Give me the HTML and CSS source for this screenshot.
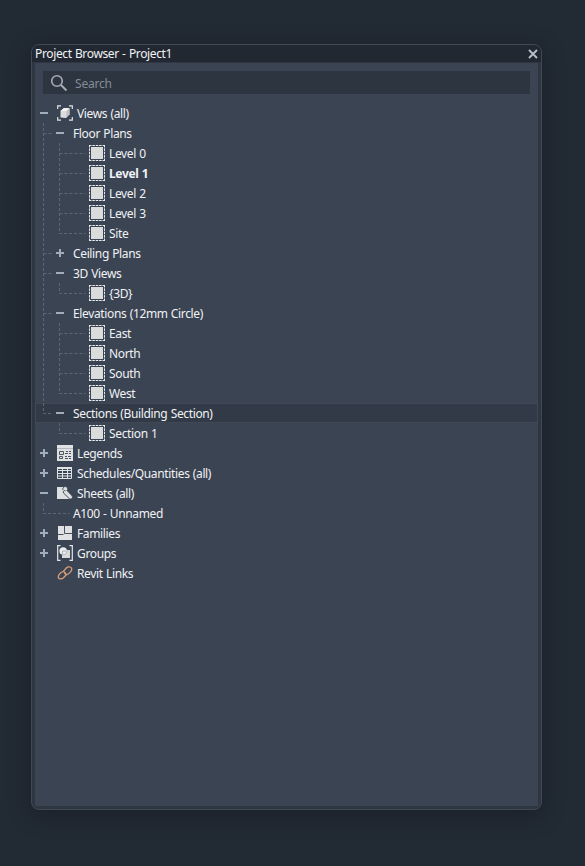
FILE: index.html
```html
<!DOCTYPE html>
<html lang="en">
<head>
<meta charset="utf-8">
<title>Project Browser</title>
<link rel="stylesheet" href="styles.css">
</head>
<body>
<svg width="0" height="0" class="defs">
  <symbol id="minus" viewBox="0 0 16 20"><path d="M4 10h8" stroke="#a0adba" stroke-width="2"/></symbol>
  <symbol id="plus" viewBox="0 0 16 20"><path d="M4 10h8M8 6v8" stroke="#a0adba" stroke-width="2"/></symbol>
  <symbol id="v" viewBox="0 0 16 20"><path class="ln" d="M7.5 0v20"/></symbol>
  <symbol id="tee" viewBox="0 0 16 20"><path class="ln" d="M7.5 0v20M7.5 10.5h9"/></symbol>
  <symbol id="ell" viewBox="0 0 16 20"><path class="ln" d="M7.5 0v10.5h9"/></symbol>
  <symbol id="wtee" viewBox="0 0 37 20"><path class="ln" d="M7.5 0v20M7.5 10.5h26"/></symbol>
  <symbol id="well" viewBox="0 0 37 20"><path class="ln" d="M7.5 0v10.5h26"/></symbol>
  <symbol id="view" viewBox="0 0 16 16"><path d="M2 2h12v12H2z" fill="#dadbdb"/><path d="M0 .5h16M0 15.500h16M.5 0v16M15.500 0v16" fill="none" stroke="#e8eaec" stroke-dasharray="2.500 .875"/></symbol>
  <symbol id="views" viewBox="0 0 16 16"><path d="M4 .8H.7V4M12 .8h3.3V4M4 15.2H.7V12M12 15.2h3.3V12" fill="none" stroke="#dfe3e6" stroke-width="1.2"/><path d="M3.500 6 7 3l5.500.2v6L9 13l-5.500-.5z" fill="#dcdddc"/><path d="M3.500 6 7 3l5.500.2L9.500 6z" fill="#f5f5f3"/><path d="m9.500 6 3-2.800v6L9.200 13z" fill="#bfc2c4"/></symbol>
  <symbol id="legend" viewBox="0 0 16 16"><path d="M0 0h16v16H0z" fill="#e0e1e2"/><path d="M0 3.500h16" stroke="#b4b9be"/><path d="M2.500 6.500h4v3h-4zM2.500 11.500h3v2h-3zM9 6.500h2M12 6.500h2M8 8.500h3M12 8.500h2M8 11.500h2M11 11.500h3M8 13.500h3M12 13.500h2" fill="none" stroke="#4a535f"/></symbol>
  <symbol id="schedule" viewBox="0 0 16 16"><path d="M.5 2.500h14v11H.5zM.5 5.500h14M.5 8.500h14M.5 11h14M5.500 2.500v11M10.500 2.500v11" fill="none" stroke="#dfe3e6"/><path d="M0 2h15v2H0z" fill="#dfe3e6"/></symbol>
  <symbol id="sheets" viewBox="0 0 16 16"><path d="M0 2h6l6 6 3 6H0z" fill="#dedfe0"/><path d="M6 5C5 2.500 8 .5 10 2.200c1 .9.8 2.300 0 3.300l5 5.300c1.300 2-.8 4.200-2.700 2.800L6.500 8C5.700 6.500 7 5 8.500 5.800" fill="#dedfe0" stroke="#444d5a"/></symbol>
  <symbol id="families" viewBox="0 0 16 16"><path d="M1 1h14v14H1z" fill="#e0e1e2"/><path d="M7.500 1v7.500H15M1 9.500h5.500" fill="none" stroke="#4a535f"/></symbol>
  <symbol id="groups" viewBox="0 0 16 16"><path d="M3.500.7H.7v14.600h2.800M12.500.7h2.800v14.600h-2.800" fill="none" stroke="#e4e7e9" stroke-width="1.200"/><path d="M5 5h8v8H5z" fill="#d9dadb"/><circle cx="6.200" cy="6" r="3.800" fill="#eceded"/><path d="M5.500 9.500V6H9M10 5.500a4 4 0 0 1-4.500 4.300" fill="none" stroke="#9ea5ab" stroke-width=".8"/></symbol>
  <symbol id="link" viewBox="0 0 16 16"><g fill="none" stroke="#d99f78" stroke-width="1.250" stroke-linecap="round"><path d="m6.300 6.300 3-3.300C11 1.200 15.800 1.500 14.600 5c-.6 1.700-3 4.500-4.800 4.500-1.300 0-1.800-.8-1.500-1.700"/><path d="m9.700 9.300-3.200 3.400C4.500 14.700.2 14.400 1.500 10.800c.7-1.800 3-4.300 4.800-4.300 1.300 0 1.700.8 1.300 1.700"/></g></symbol>
</svg>
<main class="window">
  <header class="titlebar"><h1>Project Browser - Project1</h1>
    <svg class="close" viewBox="0 0 10 10"><path d="m1 1 8 8M9 1 1 9" stroke="#b9bec6" stroke-width="1.900"/></svg>
  </header>
  <section class="panel">
    <div class="search"><svg viewBox="0 0 18 18"><circle cx="7" cy="7" r="5.300" fill="none" stroke="#a7acb5" stroke-width="1.600"/><path d="m11 11 5.500 5.500" stroke="#a7acb5" stroke-width="2"/></svg><span>Search</span></div>
    <div class="tree">
      <div class="row root"><svg class="c"><use href="#minus"/></svg><svg class="icon"><use href="#views"/></svg><span>Views (all)</span></div>
      <div class="row group"><svg class="c"><use href="#tee"/></svg><svg class="c"><use href="#minus"/></svg><span>Floor Plans</span></div>
      <div class="row leaf"><svg class="c"><use href="#v"/></svg><svg class="w"><use href="#wtee"/></svg><svg class="icon"><use href="#view"/></svg><span>Level 0</span></div>
      <div class="row leaf active"><svg class="c"><use href="#v"/></svg><svg class="w"><use href="#wtee"/></svg><svg class="icon"><use href="#view"/></svg><span>Level 1</span></div>
      <div class="row leaf"><svg class="c"><use href="#v"/></svg><svg class="w"><use href="#wtee"/></svg><svg class="icon"><use href="#view"/></svg><span>Level 2</span></div>
      <div class="row leaf"><svg class="c"><use href="#v"/></svg><svg class="w"><use href="#wtee"/></svg><svg class="icon"><use href="#view"/></svg><span>Level 3</span></div>
      <div class="row leaf"><svg class="c"><use href="#v"/></svg><svg class="w"><use href="#well"/></svg><svg class="icon"><use href="#view"/></svg><span>Site</span></div>
      <div class="row group"><svg class="c"><use href="#tee"/></svg><svg class="c"><use href="#plus"/></svg><span>Ceiling Plans</span></div>
      <div class="row group"><svg class="c"><use href="#tee"/></svg><svg class="c"><use href="#minus"/></svg><span>3D Views</span></div>
      <div class="row leaf"><svg class="c"><use href="#v"/></svg><svg class="w"><use href="#well"/></svg><svg class="icon"><use href="#view"/></svg><span>{3D}</span></div>
      <div class="row group"><svg class="c"><use href="#tee"/></svg><svg class="c"><use href="#minus"/></svg><span>Elevations (12mm Circle)</span></div>
      <div class="row leaf"><svg class="c"><use href="#v"/></svg><svg class="w"><use href="#wtee"/></svg><svg class="icon"><use href="#view"/></svg><span>East</span></div>
      <div class="row leaf"><svg class="c"><use href="#v"/></svg><svg class="w"><use href="#wtee"/></svg><svg class="icon"><use href="#view"/></svg><span>North</span></div>
      <div class="row leaf"><svg class="c"><use href="#v"/></svg><svg class="w"><use href="#wtee"/></svg><svg class="icon"><use href="#view"/></svg><span>South</span></div>
      <div class="row leaf"><svg class="c"><use href="#v"/></svg><svg class="w"><use href="#well"/></svg><svg class="icon"><use href="#view"/></svg><span>West</span></div>
      <div class="row group selected"><svg class="c"><use href="#ell"/></svg><svg class="c"><use href="#minus"/></svg><span>Sections (Building Section)</span></div>
      <div class="row leaf"><svg class="c"></svg><svg class="w"><use href="#well"/></svg><svg class="icon"><use href="#view"/></svg><span>Section 1</span></div>
      <div class="row root"><svg class="c"><use href="#plus"/></svg><svg class="icon"><use href="#legend"/></svg><span>Legends</span></div>
      <div class="row root"><svg class="c"><use href="#plus"/></svg><svg class="icon"><use href="#schedule"/></svg><span>Schedules/Quantities (all)</span></div>
      <div class="row root"><svg class="c"><use href="#minus"/></svg><svg class="icon"><use href="#sheets"/></svg><span>Sheets (all)</span></div>
      <div class="row sheet"><svg class="w"><use href="#well"/></svg><span>A100 - Unnamed</span></div>
      <div class="row root"><svg class="c"><use href="#plus"/></svg><svg class="icon"><use href="#families"/></svg><span>Families</span></div>
      <div class="row root"><svg class="c"><use href="#plus"/></svg><svg class="icon"><use href="#groups"/></svg><span>Groups</span></div>
      <div class="row root"><svg class="c"></svg><svg class="icon"><use href="#link"/></svg><span>Revit Links</span></div>
    </div>
  </section>
</main>
</body>
</html>
```
FILE: styles.css
```css
* { box-sizing: border-box; }
body {
  margin: 0;
  height: 866px;
  overflow: hidden;
  padding: 44px 0 0 31px;
  background: #222a33;
  color: #f0f2f5;
  font: 12px/20px "Noto Sans", "Open Sans", sans-serif;
  letter-spacing: -0.36px;
  word-spacing: 0.5px;
}
.defs { display: block; height: 0; }
svg { display: block; flex: none; }
.window {
  width: 511px;
  height: 766px;
  border: 1px solid #414955;
  border-radius: 8px;
  padding: 0 3px 3px;
  background: #2e3642;
  overflow: hidden;
  box-shadow: 0 5px 22px rgba(15, 20, 28, .4);
}
.titlebar {
  display: flex;
  align-items: center;
  justify-content: space-between;
  height: 18px;
  margin: 0 -3px;
  padding: 0 3px;
  background: #222832;
  border-bottom: 1px solid #303743;
}
.titlebar h1 { margin: 0; font-size: 12px; font-weight: 400; line-height: 18px; }
.close { width: 10px; height: 10px; }
.panel {
  height: 743px;
  padding-top: 8px;
  background: #3b4453;
}
.search {
  display: flex;
  align-items: center;
  gap: 7px;
  width: 487px;
  height: 23px;
  margin-left: 8px;
  padding-left: 7px;
  background: #2d3541;
  color: #858c97;
}
.search svg { width: 18px; height: 18px; }
.search span { padding-top: 2px; letter-spacing: -0.2px; }
.tree { margin-top: 9px; }
.row { display: flex; align-items: center; height: 20px; padding-left: 1px; white-space: nowrap; }
.row span { padding-top: 2px; }
.row.selected { background: #323a47; box-shadow: inset 0 0 0 1px #404856; }
.c { width: 16px; height: 20px; }
.w { width: 37px; height: 20px; }
.icon { width: 16px; height: 16px; margin-right: 4px; }
.root .icon { margin-left: 5px; }
.group span { margin-left: 5px; }
.active span { font-weight: 700; }
.ln { fill: none; stroke: #5d6674; stroke-width: 1; stroke-dasharray: 3 2; }
```
